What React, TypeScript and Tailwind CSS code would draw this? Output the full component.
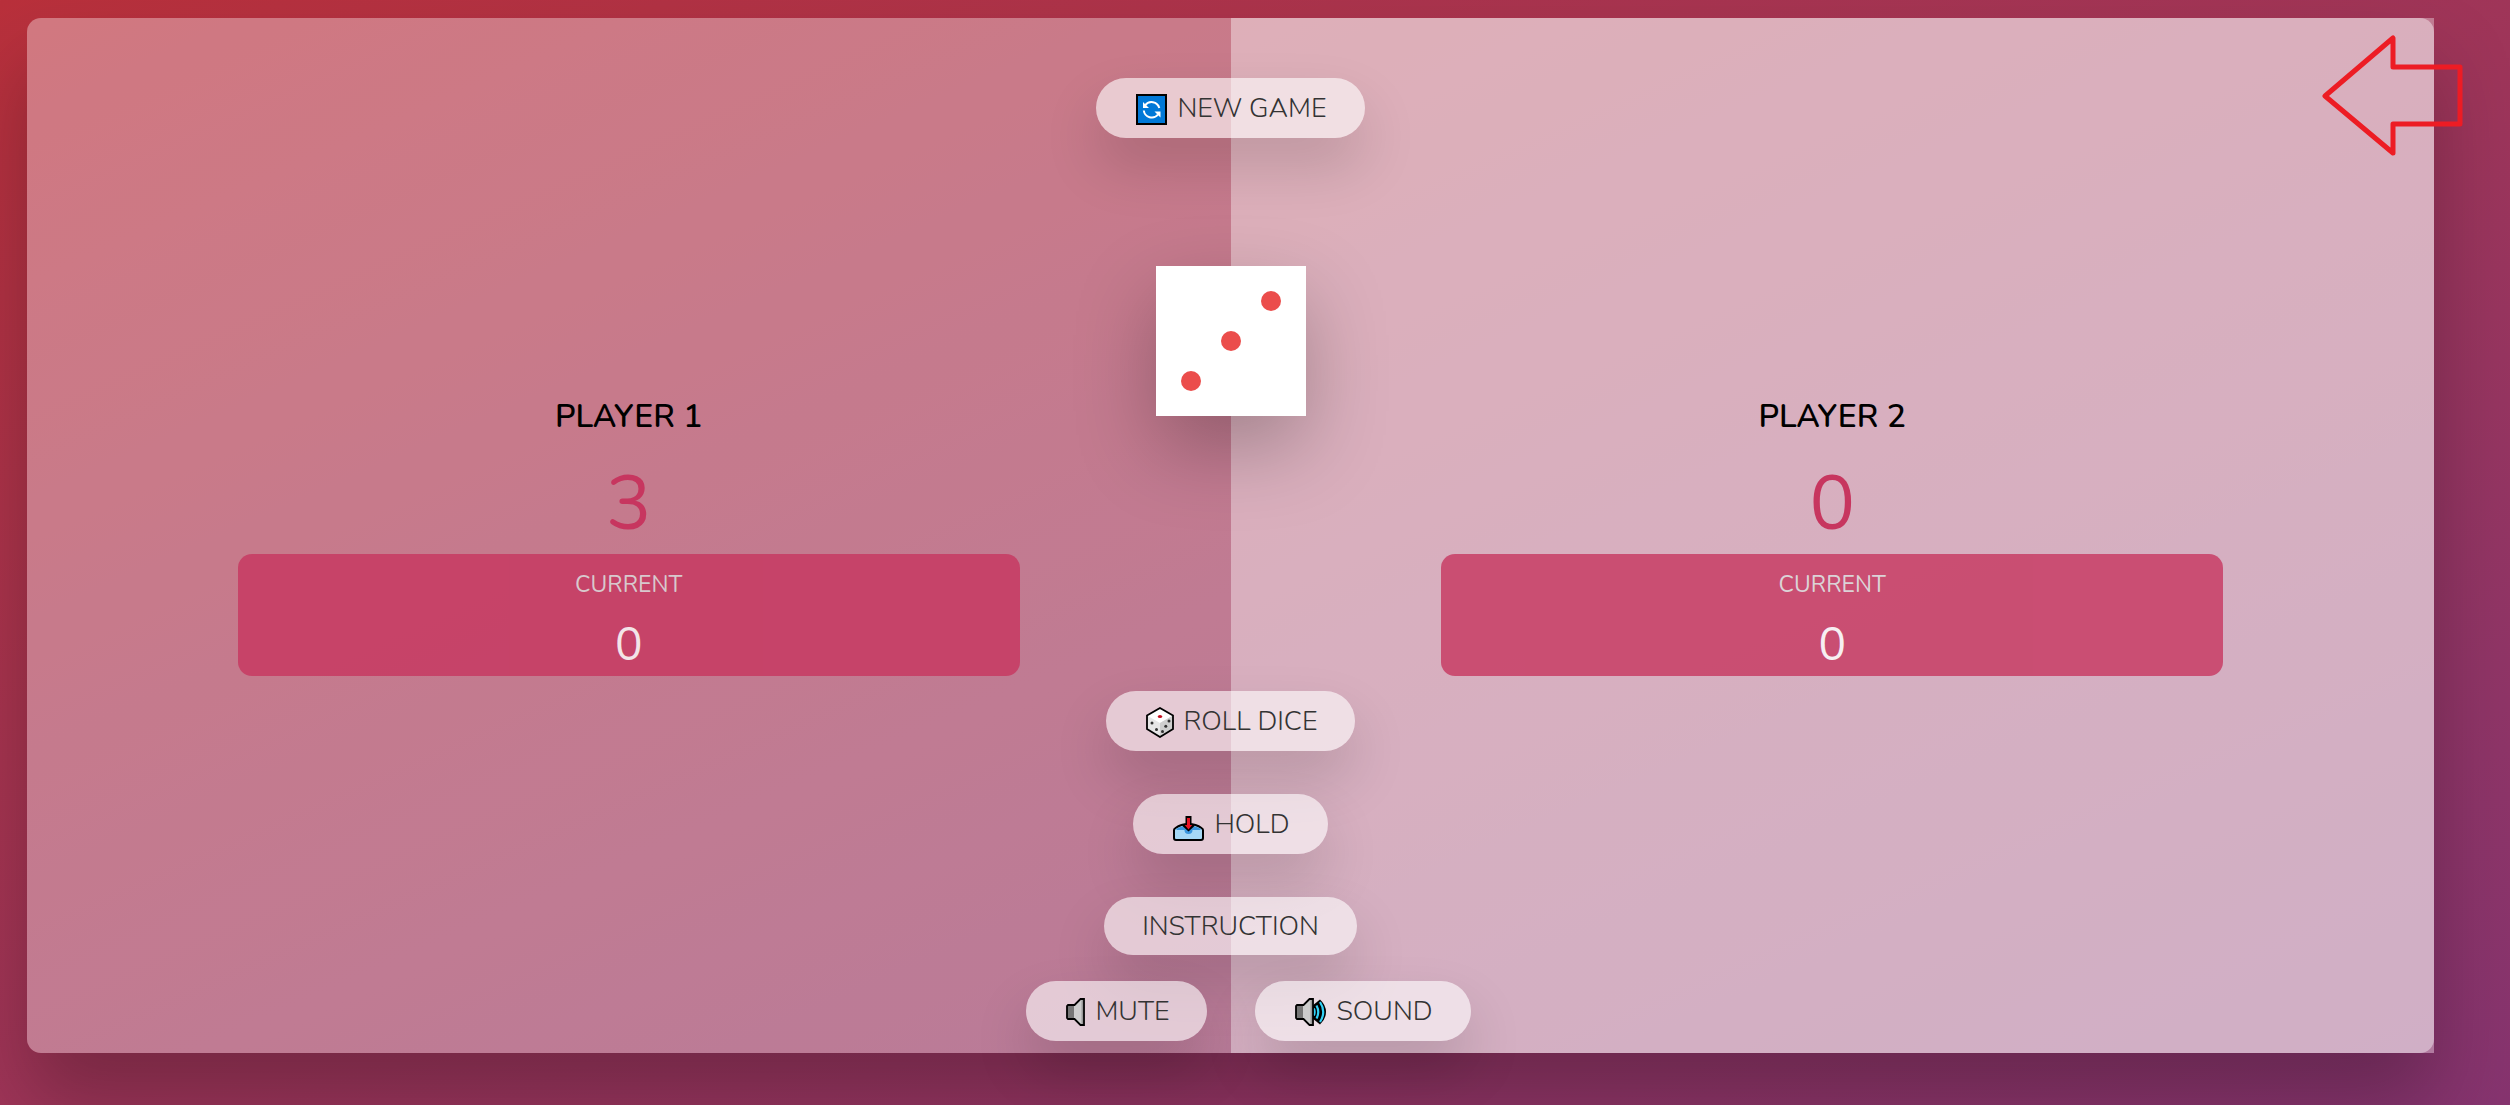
import React from 'react';

type PlayerProps = { name: string; score: number; current: number; active?: boolean };

function Player({ name, score, current, active }: PlayerProps) {
  return (
    <section
      className={
        'flex flex-1 flex-col items-center pt-[372px] ' +
        (active ? 'rounded-r-[14px] bg-white/40' : '')
      }
    >
      <h2 className="text-[32px] leading-[54px] font-semibold text-black">{name}</h2>
      <p className="mt-5 text-[76px] leading-[80px] text-[#c7365f]">{score}</p>
      <div className="mt-[10px] flex h-[122px] w-[65%] flex-col items-center rounded-[14px] bg-[#c7365f] pt-4 opacity-80">
        <p className="text-[23px] leading-[30px] text-[#dddddd]">CURRENT</p>
        <p className="mt-4 text-[46px] leading-[58px] text-white">{current}</p>
      </div>
    </section>
  );
}

function PillButton({ icon, children }: { icon?: React.ReactNode; children: React.ReactNode }) {
  return (
    <button
      type="button"
      className={
        'flex items-center gap-[10px] rounded-full bg-white/60 pt-0.5 pr-[38px] text-[27px] font-light text-[#333333] shadow-[0_28px_56px_rgba(0,0,0,0.15)] ' +
        (icon ? 'h-[60px] pl-10' : 'h-[58px] pl-[38px]')
      }
    >
      {icon}
      {children}
    </button>
  );
}

function RefreshIcon() {
  return (
    <svg width="31" height="31" viewBox="0 0 31 31" aria-hidden="true">
      <rect x="1" y="1" width="29" height="29" fill="#0078d7" stroke="#000" strokeWidth="2" />
      <g fill="none" stroke="#fff" strokeWidth="2">
        <path d="M9 11.5A8 8 0 0 1 23.3 14" />
        <path d="M7.8 16.5A8 8 0 0 0 22 20.5" />
      </g>
      <path d="M7 8v6h6zM24.5 23.500v-6h-6z" fill="#fff" />
    </svg>
  );
}

function DiceIcon() {
  return (
    <svg width="28" height="31" viewBox="0 0 28 31" aria-hidden="true">
      <path d="M14 1L27 8.500V22L14 30L1 22V8.500Z" fill="#e6e6e6" />
      <path d="M14 1L27 8.500L14 16L1 8.500Z" fill="#fff" />
      <path d="M14 16L27 8.500V22L14 30Z" fill="#cfcfcf" />
      <path d="M14 1L27 8.500V22L14 30L1 22V8.500Z" fill="none" stroke="#000" strokeWidth="1.800" />
      <ellipse cx="14" cy="9.500" rx="2.200" ry="1.600" fill="#c50f1f" />
      <g fill="#333">
        <circle cx="6" cy="16" r="1.500" />
        <circle cx="10.500" cy="22.500" r="1.500" />
        <circle cx="16.500" cy="24.500" r="1.500" />
        <circle cx="19.800" cy="19.200" r="1.500" />
        <circle cx="23" cy="14" r="1.500" />
      </g>
    </svg>
  );
}

function HoldIcon() {
  return (
    <svg width="31" height="26" viewBox="0 0 31 26" className="mt-2" aria-hidden="true">
      <path d="M1 14Q1 13 2.500 12Q8 8 15.500 8Q23 8 28.500 12Q30 13 30 14V22Q30 24 28 24H3Q1 24 1 22Z" fill="#a6d8f5" stroke="#000" strokeWidth="2" />
      <path d="M3 13Q9 9.500 15.500 9.500Q22 9.500 28 13L27 14H19.500Q19.500 18 15.500 18Q11.500 18 11.500 14H4Z" fill="#3a96dd" />
      <path d="M12.500 0h6v8h3v2l-6 5.500l-6-5.500v-2h3z" fill="#000" />
      <path d="M14 2h3v7h2.200l-3.700 4.500l-3.700-4.500H14z" fill="#e81224" />
    </svg>
  );
}

function SpeakerIcon({ waves }: { waves?: boolean }) {
  const width = waves ? 31 : 19;
  return (
    <svg width={width} height="28" viewBox={`0 0 ${width} 28`} aria-hidden="true">
      {waves && (
        <>
          <path d="M17 8L25 1.500Q31 7 31 14Q31 21 25 26.500L17 20Z" fill="#000" />
          <g fill="none" stroke="#31d2f7" strokeWidth="2.200">
            <path d="M18.800 10.500Q20.500 14 18.800 17.500" />
            <path d="M21.500 7.500Q25 14 21.500 20.500" />
            <path d="M25 4Q31.500 14 25 24" />
          </g>
        </>
      )}
      <path d="M1 7H8V21H1Z" fill="#767676" />
      <path d="M8 7L15 1H18V27H15L8 21Z" fill="#cccccc" />
      <path d="M15.500 2H17V26H15.500Z" fill="#999" />
      <path d="M2 7H8.500L14.500 1H18V27H14.500L8.500 21H2L1 20V8Z" fill="none" stroke="#000" strokeWidth="1.800" />
    </svg>
  );
}

function Dice() {
  return (
    <svg
      viewBox="0 0 150 150"
      role="img"
      aria-label="Dice showing three"
      className="mt-32 size-[150px] bg-white shadow-[0_32px_80px_rgba(0,0,0,0.25)]"
    >
      <g fill="#eb4d4b">
        <circle cx="115" cy="35" r="10" />
        <circle cx="75" cy="75" r="10" />
        <circle cx="35" cy="115" r="10" />
      </g>
    </svg>
  );
}

export default function App() {
  return (
    <div className="relative min-h-screen overflow-hidden bg-linear-to-tl from-[#86346f] to-[#b9303b] pt-[18px] pr-[76px] pb-[52px] pl-[27px] font-['Nunito','Lato',sans-serif]">
      <main className="grid rounded-l-[14px] bg-white/35 shadow-[0_48px_80px_rgba(0,0,0,0.25)]">
        <div className="col-start-1 row-start-1 flex">
          <Player name="PLAYER 1" score={3} current={0} />
          <Player name="PLAYER 2" score={0} current={0} active />
        </div>
        <div className="z-10 col-start-1 row-start-1 flex flex-col items-center justify-self-center pt-[60px] pb-3">
          <PillButton icon={<RefreshIcon />}>NEW GAME</PillButton>
          <Dice />
          <div className="mt-[275px] flex flex-col items-center gap-[43px]">
            <PillButton icon={<DiceIcon />}>ROLL DICE</PillButton>
            <PillButton icon={<HoldIcon />}>HOLD</PillButton>
            <PillButton>INSTRUCTION</PillButton>
          </div>
          <div className="-mr-9 mt-[26px] flex gap-12">
            <PillButton icon={<SpeakerIcon />}>MUTE</PillButton>
            <PillButton icon={<SpeakerIcon waves />}>SOUND</PillButton>
          </div>
        </div>
      </main>
      <svg
        width="142"
        height="122"
        viewBox="0 0 142 122"
        className="absolute top-[35px] right-[46px] z-20"
        aria-hidden="true"
      >
        <path d="M3 61L71 3V32H138V89H71V118Z" fill="none" stroke="#ed1c24" strokeWidth="5" strokeLinejoin="round" />
      </svg>
    </div>
  );
}
